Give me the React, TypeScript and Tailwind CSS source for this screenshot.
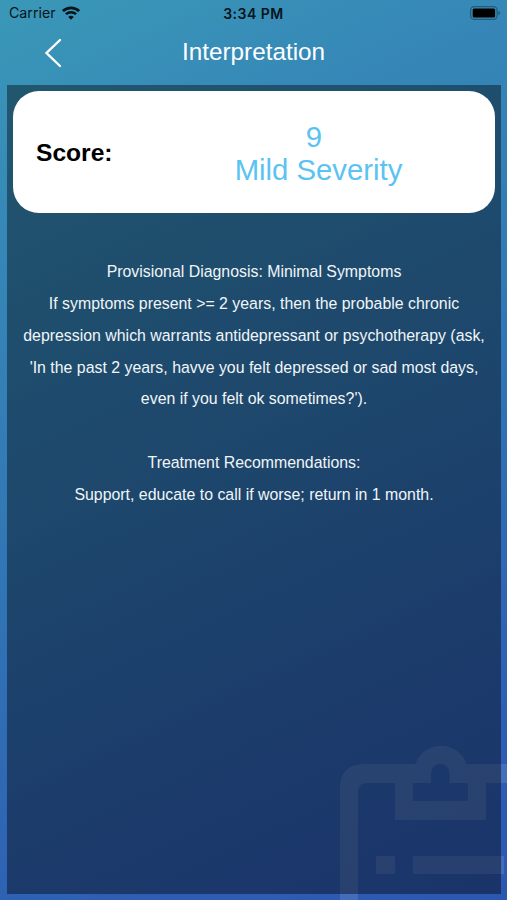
import React from "react";

const diagnosis = [
  "Provisional Diagnosis: Minimal Symptoms",
  "If symptoms present >= 2 years, then the probable chronic",
  "depression which warrants antidepressant or psychotherapy (ask,",
  "'In the past 2 years, havve you felt depressed or sad most days,",
  "even if you felt ok sometimes?').",
];

const treatment = [
  "Treatment Recommendations:",
  "Support, educate to call if worse; return in 1 month.",
];

function WifiIcon() {
  return (
    <svg width="18" height="14" viewBox="0 0 18 14" fill="none" stroke="#06141b">
      <path d="M0.9 5.1C5.4 0.8 12.6 0.8 17.1 5.1" strokeWidth="2.7" />
      <path d="M3.9 8.2C6.8 5.5 11.2 5.5 14.1 8.2" strokeWidth="2.5" />
      <path d="M9 13.7L6.2 10.9C7.8 9.4 10.2 9.4 11.8 10.9Z" fill="#06141b" stroke="none" />
    </svg>
  );
}

function BatteryIcon() {
  return (
    <svg width="31" height="14" viewBox="0 0 31 14">
      <rect x="0.6" y="0.6" width="26.5" height="12.8" rx="3.6" fill="none" stroke="#235c77" strokeWidth="1.2" />
      <rect x="2.7" y="2.5" width="22.4" height="9" rx="1.5" fill="#000" />
      <path d="M28.4 4.8C30.6 5.6 30.6 8.4 28.4 9.2Z" fill="#235c77" />
    </svg>
  );
}

function Clipboard() {
  return (
    <svg
      className="pointer-events-none absolute right-0 bottom-0"
      width="177"
      height="160"
      viewBox="330 740 177 160"
      fill="#fff"
      fillOpacity="0.115"
    >
      <path
        fillRule="evenodd"
        d="M340 900V788Q340 764 365 764H415.500A27 27 0 0 1 466.500 764H507V783H486V820H395V783H367Q358 783 358 792V900Z M413 783V801H468V783H449.500V773A9.200 9.200 0 0 0 431 773V783Z"
      />
      <path d="M376 856H395V874H376ZM413 856H504V874H413Z" />
    </svg>
  );
}

export default function App() {
  return (
    <div
      className="relative flex h-[900px] w-[507px] flex-col overflow-hidden bg-[linear-gradient(155deg,#3a98b7_0%,#3688b7_20%,#3176b5_50%,#2e5fb3_83%,#2c57b1_100%)] text-white"
      style={{ fontFamily: '"Liberation Sans", Arial, sans-serif' }}
    >
      <Clipboard />
      <header className="relative h-[85px] shrink-0">
        <div className="grid h-[26px] grid-cols-3 items-center pr-[6px] pl-[9px] font-[Inter,sans-serif] text-[#06141b]">
          <div className="flex items-center gap-[6px] text-[14.2px]">
            <span>Carrier</span>
            <WifiIcon />
          </div>
          <span className="pr-[3px] text-center text-[14px] font-semibold tracking-[0.5px]">3:34 PM</span>
          <div className="flex justify-end">
            <BatteryIcon />
          </div>
        </div>
        <div className="grid h-[52px] grid-cols-[72px_1fr_72px] items-center">
          <button aria-label="Back" className="flex justify-end pt-[1px] pr-[10px]">
            <svg width="18" height="30" viewBox="0 0 18 30" fill="none" stroke="#fff" strokeWidth="2.4">
              <path d="M16 2L2.500 15L16 28" strokeLinecap="round" />
            </svg>
          </button>
          <h1 className="text-center text-[24.3px] leading-[30px]">Interpretation</h1>
        </div>
      </header>
      <main className="relative mr-[6px] mb-[6px] ml-[7px] flex-1 bg-black/40 px-[6px] pt-[6px]">
        <section className="flex h-[122px] items-center rounded-[26px] bg-white pt-[2px] pl-[23px]">
          <h2 className="w-[120px] text-[24.6px] font-bold text-black">Score:</h2>
          <div className="flex w-[325px] flex-col items-center text-[29.3px] leading-[33px] text-[#5ac3f1]">
            <span className="pr-[9px]">9</span>
            <span>Mild Severity</span>
          </div>
        </section>
        <section className="mt-[43.2px] flex flex-col items-center gap-[32px] text-[15.88px] leading-[31.8px] text-[#f0f5f8]">
          <div className="flex flex-col items-center">
            {diagnosis.map((line) => (
              <p key={line} className="whitespace-nowrap">{line}</p>
            ))}
          </div>
          <div className="flex flex-col items-center">
            {treatment.map((line) => (
              <p key={line} className="whitespace-nowrap">{line}</p>
            ))}
          </div>
        </section>
      </main>
    </div>
  );
}
